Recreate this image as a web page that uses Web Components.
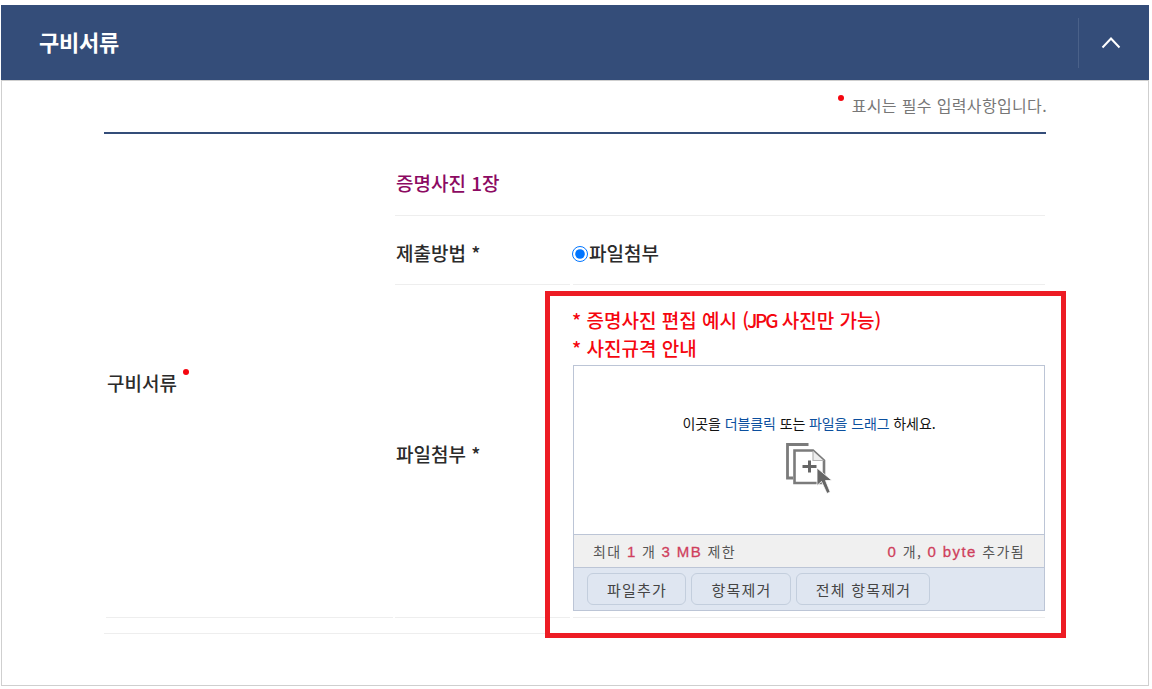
<!DOCTYPE html>
<html lang="ko">
<head>
<meta charset="utf-8">
<title>구비서류</title>
<style>
    html, body { margin: 0; padding: 0; background: #fff; }
    body { height: 689px; overflow: hidden; font-family: "Noto Sans CJK KR", "Noto Sans", sans-serif; }
</style>
</head>
<body>
<doc-panel heading="구비서류">
    <required-note>표시는 필수 입력사항입니다.</required-note>
    <form-table label="구비서류">
        <form-title>증명사진 1장</form-title>
        <form-row label="제출방법 *" height="69" shift="4">
            <radio-option>파일첨부</radio-option>
        </form-row>
        <form-row label="파일첨부 *" height="333" shift="5">
            <upload-box>
                <span slot="notice">* 증명사진 편집 예시 <span style="letter-spacing:-2.2px">(JPG</span> 사진만 가능)</span>
                <span slot="notice">* 사진규격 안내</span>
            </upload-box>
        </form-row>
    </form-table>
</doc-panel>

<script>
class DocPanel extends HTMLElement {
    constructor() {
        super();
        this.attachShadow({ mode: "open" });
        this.shadowRoot.innerHTML = `
            <style>
                :host { display: block; box-sizing: border-box; position: relative; height: 681px; margin: 5px 3px 0 1px; border: 1px solid #cfcfcf; border-top: 0; }
                header { display: flex; align-items: stretch; height: 75px; margin: 0 -1px; background: #344d79; border-bottom: 1px solid #cfcfcf; }
                h2 { flex: 1; margin: 0; padding-left: 38px; color: #fff; font-size: 22px; font-weight: 700; line-height: 73px; letter-spacing: -0.2px; }
                .toggle { display: flex; align-items: center; justify-content: center; width: 70px; height: 50px; margin-top: 13px; border-left: 1px solid #4a6189; }
                svg { display: block; margin: -1px 0 0 -6px; }
                .body { padding: 0 102px; }
            </style>
            <header>
                <h2></h2>
                <div class="toggle">
                    <svg width="20" height="13" viewBox="0 0 20 13"><path d="M1.5 11.5 10 2.5l8.5 9" fill="none" stroke="#fff" stroke-width="2"/></svg>
                </div>
            </header>
            <div class="body"><slot></slot></div>
        `;
        this.shadowRoot.querySelector("h2").textContent = this.getAttribute("heading");
    }
}

class RequiredNote extends HTMLElement {
    constructor() {
        super();
        this.attachShadow({ mode: "open" });
        this.shadowRoot.innerHTML = `
            <style>
                :host { display: flex; justify-content: flex-end; box-sizing: border-box; height: 51px; padding-top: 11px; color: #777; font-size: 16px; line-height: 26px; letter-spacing: 0.35px; margin-right: -1px; }
                i { width: 6px; height: 6px; margin: 3px 8px 0 0; border-radius: 50%; background: #f5060f; }
            </style>
            <i></i><span><slot></slot></span>
        `;
    }
}

class FormTable extends HTMLElement {
    constructor() {
        super();
        this.attachShadow({ mode: "open" });
        this.shadowRoot.innerHTML = `
            <style>
                :host { display: block; height: 502px; border-top: 2px solid #344d79; border-bottom: 1px solid #eee; box-sizing: border-box; }
                .grid { display: grid; grid-template-columns: 287px 1fr; column-gap: 2px; height: 484px; margin-left: 2px; }
                .head { display: flex; align-items: center; box-sizing: border-box; padding: 14px 0 0 1px; border-bottom: 1px solid #eee; font-size: 19px; font-weight: 500; color: #2b2b2b; }
                .head i { width: 6px; height: 6px; margin: -22px 0 0 6px; border-radius: 50%; background: #f5060f; }
            </style>
            <div class="grid">
                <div class="head"><span></span><i></i></div>
                <div><slot></slot></div>
            </div>
        `;
        this.shadowRoot.querySelector("span").textContent = this.getAttribute("label");
    }
}

class FormTitle extends HTMLElement {
    constructor() {
        super();
        this.attachShadow({ mode: "open" });
        this.shadowRoot.innerHTML = `
            <style>
                :host { display: flex; align-items: center; box-sizing: border-box; height: 82px; padding: 16px 0 0 1px; margin-right: 1px; border-bottom: 1px solid #eee; color: #8c0a62; font-size: 19px; font-weight: 500; }
            </style>
            <slot></slot>
        `;
    }
}

class FormRow extends HTMLElement {
    constructor() {
        super();
        this.attachShadow({ mode: "open" });
        this.shadowRoot.innerHTML = `
            <style>
                :host { display: grid; grid-template-columns: 175px 1fr; column-gap: 3px; margin-right: 1px; }
                .label, .value { display: flex; align-items: center; box-sizing: border-box; border-bottom: 1px solid #eee; }
                .label { padding-left: 1px; color: #2b2b2b; font-size: 19px; font-weight: 500; }
                .value { min-width: 0; }
            </style>
            <div class="label"></div>
            <div class="value"><slot></slot></div>
        `;
        const label = this.shadowRoot.querySelector(".label");
        label.textContent = this.getAttribute("label");
        label.style.paddingTop = this.getAttribute("shift") + "px";
        this.style.height = this.getAttribute("height") + "px";
    }
}

class RadioOption extends HTMLElement {
    constructor() {
        super();
        this.attachShadow({ mode: "open" });
        this.shadowRoot.innerHTML = `
            <style>
                :host { display: flex; align-items: center; margin-left: -1px; padding-top: 4px; color: #2b2b2b; font-size: 19px; font-weight: 500; }
                input { width: 16px; height: 16px; margin: 4px 1px 0 0; }
            </style>
            <input type="radio" checked><label><slot></slot></label>
        `;
    }
}

class UploadButton extends HTMLElement {
    constructor() {
        super();
        this.attachShadow({ mode: "open" });
        this.shadowRoot.innerHTML = `
            <style>
                :host { display: flex; align-items: center; justify-content: center; box-sizing: border-box; height: 32px; padding-left: 1px; border: 1px solid #c3cedd; border-radius: 6px; background: #dfe6f1; color: #444; font-size: 15px; letter-spacing: 1.2px; }
            </style>
            <slot></slot>
        `;
    }
}
customElements.define("upload-button", UploadButton);

class UploadBox extends HTMLElement {
    constructor() {
        super();
        this.attachShadow({ mode: "open" });
        this.shadowRoot.innerHTML = `
            <style>
                :host { display: block; width: 472px; height: 332px; box-sizing: border-box; padding-top: 21px; }
                .notices { height: 59px; margin-left: -1px; color: #f5060f; font-size: 19px; font-weight: 500; line-height: 28px; }
                ::slotted(span) { display: block; }
                .box { box-sizing: border-box; height: 246px; border: 1px solid #bcc5d6; display: flex; flex-direction: column; }
                .drop { flex: 1; display: flex; flex-direction: column; align-items: center; padding-top: 46px; box-sizing: border-box; color: #111; font-size: 14px; line-height: 22px; letter-spacing: -0.1px; }
                .drop b { font-weight: 400; color: #0b4f9e; }
                .drop svg { display: block; margin: 7px 0 0 2px; }
                .status { display: flex; justify-content: space-between; box-sizing: border-box; height: 34px; padding: 0 19px 0 19px; background: #f0f0f0; border-top: 1px solid #bcc5d6; border-bottom: 1px solid #bcc5d6; color: #555; font-size: 14px; line-height: 32px; letter-spacing: 1.4px; }
                .status b { font-family: "Liberation Sans", sans-serif; font-size: 15px; font-weight: 400; color: #cf3f5c; -webkit-text-stroke: 0.3px #cf3f5c; }
                .actions { display: flex; gap: 5px; height: 42px; padding: 5px 0 0 13px; box-sizing: border-box; background: #dfe6f1; }
                .add { width: 99px; } .del { width: 100px; } .all { width: 134px; }
            </style>
            <div class="notices"><slot name="notice"></slot></div>
            <div class="box">
                <div class="drop">
                    <span>이곳을 <b>더블클릭</b> 또는 <b>파일을 드래그</b> 하세요.</span>
                    <svg width="52" height="56" viewBox="0 0 52 56">
                        <path d="M24.500 3.500H3.500V37H9" fill="none" stroke="#7b7b7b" stroke-width="2.800"/>
                        <path d="M10.500 9.500H29L40 19.500V42H10.500z" fill="#fff" stroke="#7b7b7b" stroke-width="2.600"/>
                        <path d="M29 10v9.500h10.500" fill="#eee" stroke="#b5b5b5" stroke-width="1.200"/>
                        <path d="M18.500 25.500h14M25.500 19.500v12" stroke="#666" stroke-width="3" fill="none"/>
                        <path d="M33 27v17.500l4.500-4 5.500 12 3.200-1.500-4.700-11.500H48z" fill="#666" stroke="#fff" stroke-width="0.800"/>
                    </svg>
                </div>
                <div class="status">
                    <span>최대 <b>1</b> 개 <b>3 MB</b> 제한</span>
                    <span><b>0</b> 개, <b>0 byte</b> 추가됨</span>
                </div>
                <div class="actions">
                    <upload-button class="add">파일추가</upload-button>
                    <upload-button class="del">항목제거</upload-button>
                    <upload-button class="all">전체 항목제거</upload-button>
                </div>
            </div>
        `;
    }
}

// red annotation box that sits over the upload area
class MarkBox extends HTMLElement {
    constructor() {
        super();
        this.attachShadow({ mode: "open" });
        this.shadowRoot.innerHTML = `
            <style>
                :host { position: absolute; left: 543px; top: 286px; width: 521px; height: 347px; box-sizing: border-box; border: 5px solid #ed1c24; pointer-events: none; }
            </style>
        `;
    }
}

customElements.define("doc-panel", DocPanel);
customElements.define("required-note", RequiredNote);
customElements.define("form-table", FormTable);
customElements.define("form-title", FormTitle);
customElements.define("form-row", FormRow);
customElements.define("radio-option", RadioOption);
customElements.define("upload-box", UploadBox);
customElements.define("mark-box", MarkBox);

document.querySelector("doc-panel").appendChild(document.createElement("mark-box"));
</script>
</body>
</html>
